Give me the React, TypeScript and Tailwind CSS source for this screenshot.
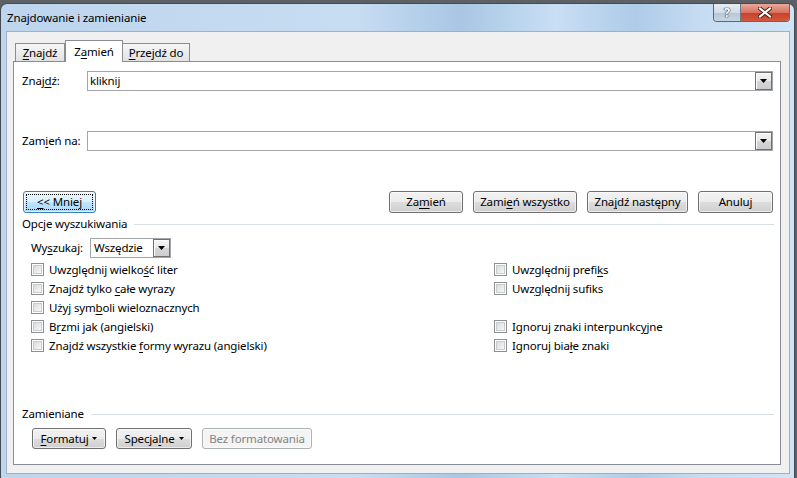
import React from 'react';

// Win7 "Znajdowanie i zamienianie" dialog

const U = ({ children }: { children: React.ReactNode }) => (
  <span className="underline decoration-1 underline-offset-[2px]">{children}</span>
);

function Arrow() {
  return (
    <svg width="7" height="4" viewBox="0 0 7 4">
      <path d="M0 0H7L3.5 4Z" fill="#000" />
    </svg>
  );
}

function DropBtn() {
  return (
    <div className="w-[17px] h-full shrink-0 flex items-center justify-center border border-[#707070] bg-[linear-gradient(#f4f4f4_0%,#e8e8e8_50%,#d6d6d6_51%,#cdcdcd_100%)] shadow-[inset_1px_1px_0_#fcfcfc]">
      <Arrow />
    </div>
  );
}

function Btn({
  children,
  className = '',
  focus = false,
  disabled = false,
}: {
  children: React.ReactNode;
  className?: string;
  focus?: boolean;
  disabled?: boolean;
}) {
  const look = disabled
    ? 'border-[#adb2b5] bg-[#f4f4f4] text-[#838383]'
    : focus
    ? 'border-[#3c7fb1] bg-[linear-gradient(#eaf6fd_0%,#d9f0fc_50%,#bee6fd_51%,#a7d9f5_100%)] text-black'
    : 'border-[#707070] bg-[linear-gradient(#f2f2f2_0%,#ebebeb_50%,#dddddd_51%,#cfcfcf_100%)] text-black';
  return (
    <div className={`shrink-0 flex items-center justify-center whitespace-nowrap rounded-[3px] border shadow-[inset_0_0_0_1px_rgba(255,255,255,0.6)] ${look} ${className}`}>
      {children}
    </div>
  );
}

function Check({ children }: { children: React.ReactNode }) {
  return (
    <div className="h-[19px] flex items-center gap-[5px]">
      <span className="w-[13px] h-[13px] shrink-0 border border-[#8e8f8f] bg-white p-[1px]">
        <span className="block w-full h-full border border-[#c9cccf] bg-[linear-gradient(135deg,#d8dbde_0%,#f7f7f7_100%)]" />
      </span>
      <span className="whitespace-nowrap">{children}</span>
    </div>
  );
}

function Section({ title }: { title: string }) {
  return (
    <div className="h-[16px] flex items-center gap-[7px] pl-[8px] pr-[6px]">
      <span className="whitespace-nowrap">{title}</span>
      <div className="flex-1 h-px bg-[#d5dfe5]" />
    </div>
  );
}

export default function App() {
  return (
    <div className="w-[797px] h-[478px] overflow-hidden bg-[#5d6166] pt-[3px] flex font-['Segoe_UI','Noto_Sans',sans-serif] text-[11.5px] tracking-[-0.15px] leading-none text-black antialiased">
      <div className="w-[795px] h-[476px] flex flex-col rounded-t-[7px] border border-b-0 border-[#434c56] bg-[linear-gradient(90deg,#bdd5ed_0%,#c3daf0_30%,#c6ddf2_45%,#a9c6e4_58%,#b8d3ec_64%,#c8dff4_70%,#aecbe8_80%,#c5dcf2_88%,#d0e4f6_100%)]">
        {/* title bar */}
        <div className="h-[27px] shrink-0 flex items-start justify-between pl-[6px] pr-[4px]">
          <span className="mt-[8px] text-[11.5px] whitespace-nowrap">Znajdowanie i zamienianie</span>
          <div className="flex h-[18px] rounded-b-[4px] overflow-hidden border border-t-0 border-[#5b6876]">
            <div className="w-[27px] flex items-center justify-center border-r border-[#6c7a88] bg-[linear-gradient(#e6edf4_0%,#d2dce7_50%,#b7c6d6_51%,#c8d6e4_100%)]">
              <span className="text-[13px] font-bold text-white [text-shadow:0_0_1px_#2d3a48,0_0_1px_#2d3a48,0_0_1px_#2d3a48]">?</span>
            </div>
            <div className="w-[48px] flex items-center justify-center bg-[linear-gradient(#e9a99c_0%,#d9735f_50%,#c7402a_51%,#d2583f_100%)]">
              <svg width="14" height="11" viewBox="0 0 14 11">
                <path d="M2 1.5L12 9.5M12 1.5L2 9.5" stroke="#3a1a14" strokeWidth="4" strokeLinecap="square" />
                <path d="M2 1.5L12 9.5M12 1.5L2 9.5" stroke="#ffffff" strokeWidth="2.2" strokeLinecap="square" />
              </svg>
            </div>
          </div>
        </div>

        {/* client area */}
        <div className="flex-1 ml-[5px] mr-[4px] mb-[5px] flex flex-col border border-[#9fb0c2] bg-[#f0f0f0] pt-[8px] pl-[6px] pr-[8px] pb-[8px]">
          {/* tabs */}
          <div className="h-[21px] shrink-0 flex items-end pl-[2px] relative z-10">
            <div className="h-[18px] w-[50px] flex items-center justify-center border border-b-0 border-[#898c95] bg-[linear-gradient(#f6f6f6_0%,#ececec_50%,#e2e2e2_100%)]">
              <span><U>Z</U>najdź</span>
            </div>
            <div className="h-[22px] w-[58px] -mb-px flex items-center justify-center border border-b-0 border-[#898c95] bg-white">
              <span>Z<U>a</U>mień</span>
            </div>
            <div className="h-[18px] w-[67px] flex items-center justify-center border border-b-0 border-l-0 border-[#898c95] bg-[linear-gradient(#f6f6f6_0%,#ececec_50%,#e2e2e2_100%)]">
              <span><U>P</U>rzejdź do</span>
            </div>
          </div>

          {/* panel */}
          <div className="flex-1 flex flex-col border border-[#898c95] bg-white">
            <div className="mt-[9px] flex items-center pl-[8px] pr-[7px]">
              <span className="w-[65px] shrink-0">Znaj<U>d</U>ź:</span>
              <div className="flex-1 h-[20px] flex border border-[#a3a5ab] bg-white">
                <span className="flex-1 pl-[2px] self-center">kliknij</span>
                <DropBtn />
              </div>
            </div>

            <div className="mt-[40px] flex items-center pl-[8px] pr-[7px]">
              <span className="w-[65px] shrink-0">Zam<U>i</U>eń na:</span>
              <div className="flex-1 h-[20px] flex border border-[#a3a5ab] bg-white">
                <span className="flex-1" />
                <DropBtn />
              </div>
            </div>

            <div className="mt-[40px] flex items-center justify-between pl-[9px] pr-[7px]">
              <Btn focus className="w-[73px] h-[22px] p-[2px]">
                <div className="w-full h-full flex items-center justify-center border border-dotted border-black">
                  <span><U>&lt;</U>&lt; Mniej</span>
                </div>
              </Btn>
              <div className="flex gap-[10px]">
                <Btn className="w-[74px] h-[22px]">Za<U>m</U>ień</Btn>
                <Btn className="w-[104px] h-[22px]">Zami<U>e</U>ń wszystko</Btn>
                <Btn className="w-[101px] h-[22px]">Zna<U>j</U>dź następny</Btn>
                <Btn className="w-[75px] h-[22px]">Anuluj</Btn>
              </div>
            </div>

            <div className="mt-[3px]">
              <Section title="Opcje wyszukiwania" />
            </div>

            <div className="mt-[6px] flex items-center pl-[17px]">
              <span className="w-[59px] shrink-0">Wy<U>s</U>zukaj:</span>
              <div className="w-[81px] h-[20px] flex border border-[#a3a5ab] bg-white">
                <span className="flex-1 pl-[3px] self-center">Wszędzie</span>
                <DropBtn />
              </div>
            </div>

            <div className="mt-[2px] pl-[17px] grid grid-cols-[463px_1fr]">
              <Check>Uwzględnij wielko<U>ś</U>ć liter</Check>
              <Check>Uwzględnij prefi<U>k</U>s</Check>
              <Check>Znajdź tylko <U>c</U>ałe wyrazy</Check>
              <Check>Uwz<U>g</U>lędnij sufiks</Check>
              <Check>Użyj sym<U>b</U>oli wieloznacznych</Check>
              <div className="h-[19px]" />
              <Check>B<U>r</U>zmi jak (angielski)</Check>
              <Check>Ignoruj znaki interpunkc<U>y</U>jne</Check>
              <Check>Znajdź wszystkie <U>f</U>ormy wyrazu (angielski)</Check>
              <Check>Ignoruj bia<U>ł</U>e znaki</Check>
            </div>

            <div className="mt-[51px]">
              <Section title="Zamieniane" />
            </div>

            <div className="mt-[6px] flex gap-[10px] pl-[18px]">
              <Btn className="w-[74px] h-[21px] gap-[4px]">
                <span><U>F</U>ormatuj</span>
                <svg width="5" height="3" viewBox="0 0 5 3"><path d="M0 0H5L2.5 3Z" fill="#000" /></svg>
              </Btn>
              <Btn className="w-[76px] h-[21px] gap-[4px]">
                <span>Specja<U>l</U>ne</span>
                <svg width="5" height="3" viewBox="0 0 5 3"><path d="M0 0H5L2.5 3Z" fill="#000" /></svg>
              </Btn>
              <Btn disabled className="w-[110px] h-[21px]">Bez formatowania</Btn>
            </div>
          </div>
        </div>
      </div>
    </div>
  );
}
